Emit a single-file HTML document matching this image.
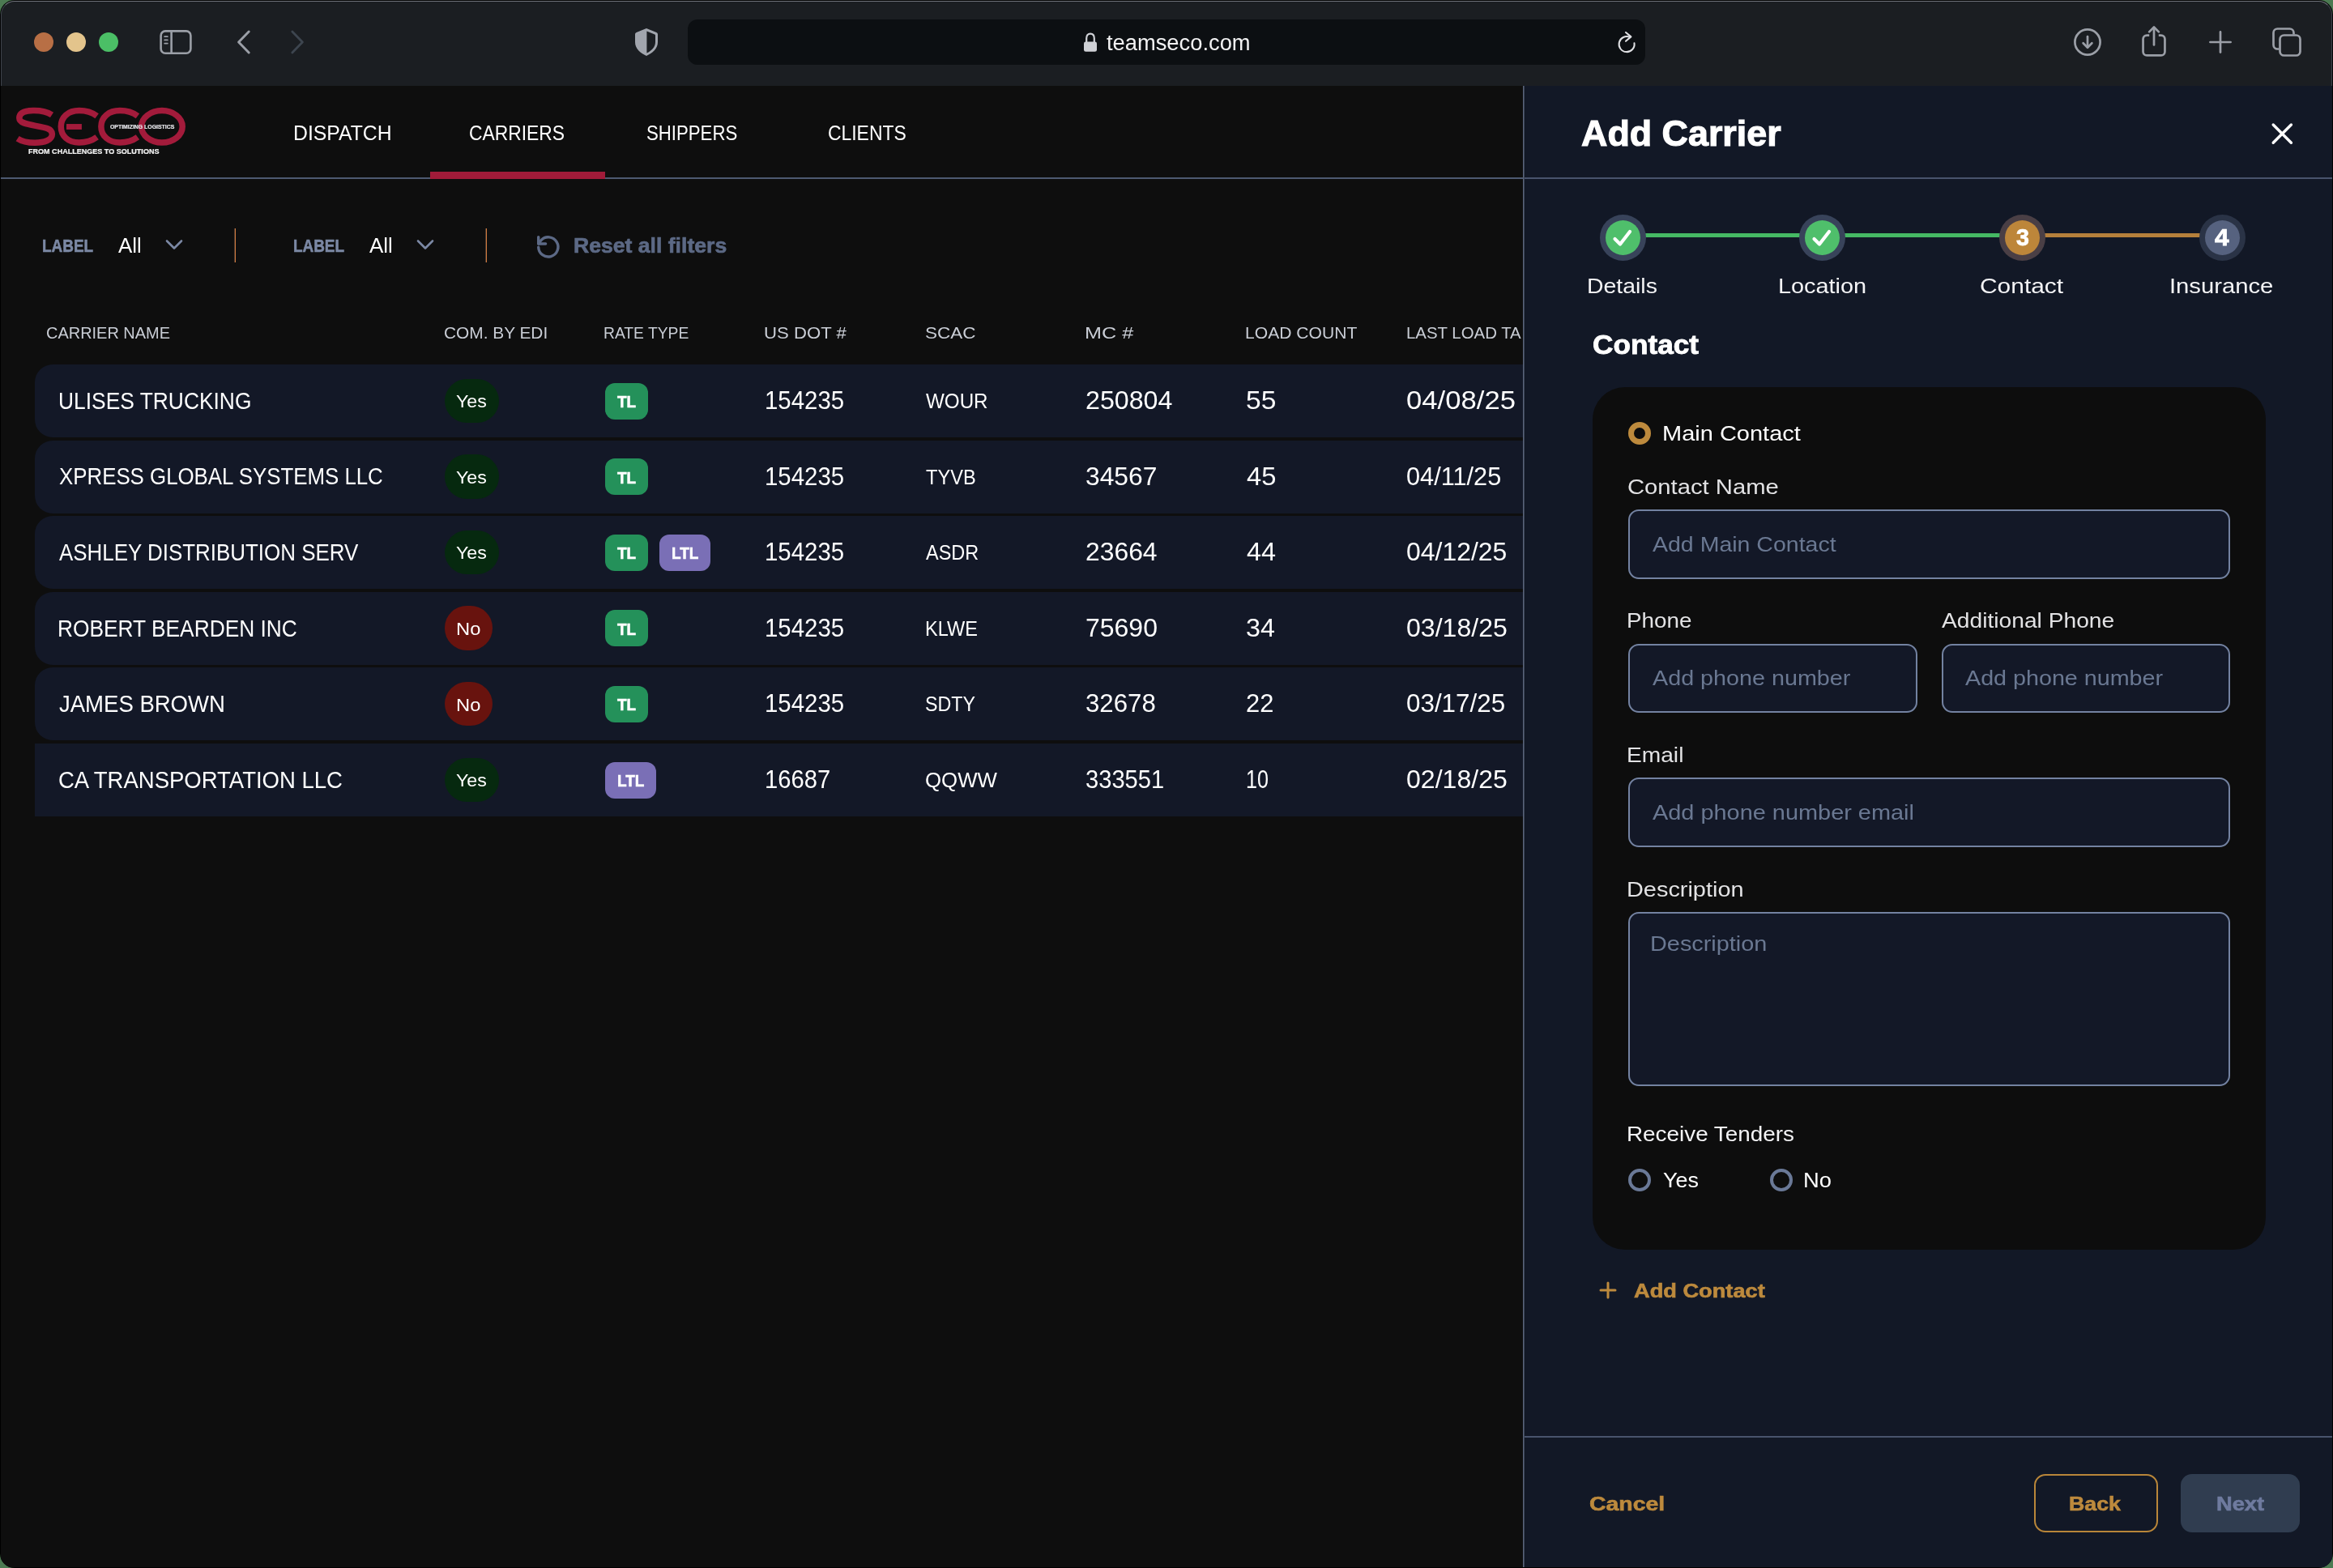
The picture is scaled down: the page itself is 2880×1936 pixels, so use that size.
<!DOCTYPE html>
<html lang="en">
<head>
<meta charset="utf-8">
<title>SECO – Carriers – Add Carrier</title>
<style>
  html, body { margin: 0; padding: 0; }
  body { width: 2880px; height: 1936px; overflow: hidden; background: #4c7a52; font-family: "Liberation Sans", sans-serif; }
  .win { position: absolute; left: 0; top: 0; width: 2880px; height: 1936px; border-radius: 18px; background: #000; overflow: hidden; }
  .abs { position: absolute; }
  .t { position: absolute; white-space: pre; line-height: normal; transform-origin: 0 0; font-family: "Liberation Sans", sans-serif; }
  svg { position: absolute; overflow: visible; }

  /* browser chrome */
  .toolbar { position: absolute; left: 1px; top: 1px; width: 2878px; height: 105px; background: #1b1e22; border-radius: 17px 17px 0 0; box-sizing: border-box; border-top: 1px solid #70747c; border-left: 1px solid #3f444c; border-right: 1px solid #3f444c; }
  .dot { position: absolute; top: 40px; width: 24px; height: 24px; border-radius: 50%; }
  .urlbar { position: absolute; left: 849px; top: 24px; width: 1182px; height: 56px; border-radius: 12px; background: #0c0f12; }

  /* app */
  .main { position: absolute; left: 1px; top: 106px; width: 1879px; height: 1829px; background: #0e0e0e; overflow: hidden; }
  .mainclip { will-change: transform; position: absolute; left: 0; top: 0; width: 1880px; height: 1936px; overflow: hidden; }
  .hline { position: absolute; left: 1px; top: 219px; width: 1879px; height: 2px; background: #4d5971; }
  .navactive { position: absolute; left: 531px; top: 212px; width: 216px; height: 9px; background: #a01b39; }
  .vdiv { position: absolute; top: 282px; width: 1px; height: 42px; background: #cf7a3e; box-shadow: -1px 0 0 #4a382e; }
  .row { position: absolute; left: 43px; width: 1900px; height: 90px; background: #131827; border-radius: 22px 0 0 22px; }
  .pill { position: absolute; left: 549px; height: 54.4px; border-radius: 27.2px; }
  .yes { width: 67px; background: #06290f; }
  .no { width: 58.8px; background: #68130e; }
  .tag { position: absolute; height: 45px; border-radius: 12px; }
  .tl { width: 53px; background: #24915a; }
  .ltl { width: 63px; background: #7a6fb6; }

  /* side panel */
  .panel { position: absolute; left: 1880px; top: 106px; width: 999px; height: 1829px; background: #121826; box-sizing: border-box; border-left: 1px solid #59647b; box-shadow: inset 1px 0 0 #3c4556; }
  .pline { position: absolute; left: 1882px; width: 997px; height: 2px; background: #48536c; }
  .card { position: absolute; left: 1966px; top: 477.5px; width: 830.5px; height: 1065px; border-radius: 40px; background: #0d0d0d; }
  .inp { position: absolute; box-sizing: border-box; border: 2px solid #7382a1; border-radius: 13px; background: #131827; }
  .step { position: absolute; top: 264.5px; width: 57px; height: 57px; border-radius: 50%; background: #38435a; }
  .step i { position: absolute; left: 7px; top: 7px; width: 43px; height: 43px; border-radius: 50%; }
  .seg { position: absolute; top: 288px; height: 5px; }
  .radio { position: absolute; width: 28px; height: 28px; border-radius: 50%; box-sizing: border-box; }
  .btn { position: absolute; top: 1820px; height: 72px; border-radius: 14px; box-sizing: border-box; }
</style>
</head>
<body>
<div class="win">

  <!-- ================= Safari toolbar ================= -->
  <div class="toolbar"></div>
  <div class="dot" style="left:42px;background:#b86f45"></div>
  <div class="dot" style="left:82px;background:#e3c48c"></div>
  <div class="dot" style="left:122px;background:#4bbf66"></div>

  <!-- sidebar icon -->
  <svg style="left:195px;top:35px" width="44" height="34" viewBox="0 0 44 34" fill="none" stroke="#9b9fa7" stroke-width="2.6">
    <rect x="3.6" y="3.4" width="36.8" height="27.4" rx="5.5"/>
    <line x1="16.6" y1="3.4" x2="16.6" y2="30.8"/>
    <g stroke-width="1.8" stroke-linecap="round"><line x1="8.2" y1="10.2" x2="11.8" y2="10.2"/><line x1="8.2" y1="14.4" x2="11.8" y2="14.4"/><line x1="8.2" y1="18.6" x2="11.8" y2="18.6"/></g>
  </svg>
  <!-- back / forward -->
  <svg style="left:288px;top:34px" width="26" height="36" viewBox="0 0 26 36" fill="none" stroke="#9b9fa7" stroke-width="3" stroke-linecap="round" stroke-linejoin="round"><polyline points="19.2,5 6.6,18 19.2,31"/></svg>
  <svg style="left:354px;top:34px" width="26" height="36" viewBox="0 0 26 36" fill="none" stroke="#3d454f" stroke-width="2.8" stroke-linecap="round" stroke-linejoin="round"><polyline points="6.8,5 19.4,18 6.8,31"/></svg>
  <!-- shield -->
  <svg style="left:784px;top:35.4px" width="28" height="34" viewBox="0 0 28 34">
    <path fill="#a1a5ad" fill-rule="evenodd" d="M14 0 L26.3 5 C27.4 5.5 28 6.3 28 7.4 V17 C28 25 21.5 30.5 14 34 C6.5 30.5 0 25 0 17 V7.4 C0 6.3 0.6 5.5 1.7 5 Z M14.4 3.5 L24.2 7.6 C24.8 7.9 25 8.2 25 8.8 V17 C25 23 20.4 27.6 14.4 30.6 Z"/>
  </svg>
  <div class="urlbar"></div>
  <!-- lock -->
  <svg style="left:1336px;top:38px" width="20" height="28" viewBox="0 0 20 28">
    <path d="M5.2 14 V9.2 C5.2 5.6 7.2 3.6 10 3.6 C12.8 3.6 14.8 5.6 14.8 9.2 V14" fill="none" stroke="#cfd1d6" stroke-width="2.2"/>
    <rect x="2" y="13.4" width="16" height="12.4" rx="2.4" fill="#cfd1d6"/>
  </svg>
  <!-- reload -->
  <svg style="left:1992px;top:38px" width="32" height="34" viewBox="0 0 32 34" fill="none" stroke="#e0e1e4" stroke-width="2.05" stroke-linecap="round" stroke-linejoin="round">
    <path d="M25.5 15.3 A9.5 9.5 0 1 1 20.1 8"/>
    <polyline points="15,2 21.4,7.4 15,12.8"/>
  </svg>
  <!-- download -->
  <svg style="left:2558px;top:33px" width="38" height="38" viewBox="0 0 38 38" fill="none" stroke="#9b9fa7" stroke-width="2.7" stroke-linecap="round" stroke-linejoin="round">
    <circle cx="19" cy="19" r="15.6"/>
    <line x1="19" y1="12.2" x2="19" y2="25.4"/>
    <polyline points="13.6,20.3 19,25.7 24.4,20.3"/>
  </svg>
  <!-- share -->
  <svg style="left:2641px;top:29px" width="36" height="44" viewBox="0 0 36 44" fill="none" stroke="#9b9fa7" stroke-width="2.7" stroke-linecap="round" stroke-linejoin="round">
    <path d="M12.2 14.55 H9.3 C6.5 14.55 4.55 16.5 4.55 19.3 V34.7 C4.55 37.5 6.5 39.45 9.3 39.45 H26.7 C29.5 39.45 31.45 37.5 31.45 34.7 V19.3 C31.45 16.5 29.5 14.55 26.7 14.55 H23.8" stroke-linecap="butt"/>
    <line x1="18" y1="5" x2="18" y2="26.4"/>
    <polyline points="12.1,10.4 18,4.5 23.9,10.4"/>
  </svg>
  <!-- plus -->
  <svg style="left:2724px;top:35px" width="34" height="34" viewBox="0 0 34 34" fill="none" stroke="#9b9fa7" stroke-width="2.7" stroke-linecap="round"><line x1="17" y1="4.4" x2="17" y2="29.6"/><line x1="4.4" y1="17" x2="29.6" y2="17"/></svg>
  <!-- tabs -->
  <svg style="left:2803px;top:32px" width="40" height="40" viewBox="0 0 40 40" fill="none" stroke="#9b9fa7" stroke-width="2.7" stroke-linejoin="round">
    <path d="M10.5 28.5 H8.5 C5.7 28.5 3.5 26.3 3.5 23.5 V8.5 C3.5 5.7 5.7 3.5 8.5 3.5 H23.5 C26.3 3.5 28.5 5.7 28.5 8.5 V10.5"/>
    <rect x="11.5" y="11.5" width="25" height="25" rx="5"/>
  </svg>

  <!-- ================= App: main list ================= -->
  <div class="main"></div>
  <div class="mainclip">
    <!-- logo -->
    <svg style="left:10px;top:120px" width="230" height="80" viewBox="0 0 2333 811" fill="none" stroke="#a31b3b" stroke-width="76">
      <path d="M548 222 C480 178 390 166 310 168 C190 170 140 205 140 262 C140 322 230 338 345 358 C470 380 552 396 552 462 C552 540 450 570 335 570 C245 570 170 552 118 518"/>
      <path d="M1112 236 C1050 190 965 168 890 168 C750 168 662 250 662 368 C662 486 750 568 890 568 C965 568 1050 546 1112 500"/>
      <rect x="730" y="335" width="192" height="70" fill="#a31b3b" stroke="none"/>
      <path d="M1622 236 C1560 190 1475 168 1400 168 C1260 168 1165 250 1165 368 C1165 486 1260 568 1400 568 C1475 568 1560 546 1622 500"/>
      <ellipse cx="1926" cy="368" rx="257" ry="200"/>
    </svg>
    <div class="hline"></div>
    <div class="navactive"></div>

    <!-- filters -->
    <svg style="left:203px;top:294px" width="24" height="16" viewBox="0 0 24 16" fill="none" stroke="#7b88a4" stroke-width="2.6" stroke-linecap="round" stroke-linejoin="round"><polyline points="3,3.5 12,12.5 21,3.5"/></svg>
    <div class="vdiv" style="left:290px"></div>
    <svg style="left:513px;top:294px" width="24" height="16" viewBox="0 0 24 16" fill="none" stroke="#7b88a4" stroke-width="2.6" stroke-linecap="round" stroke-linejoin="round"><polyline points="3,3.5 12,12.5 21,3.5"/></svg>
    <div class="vdiv" style="left:600px"></div>
    <svg style="left:663.4px;top:290.6px" width="28" height="28" viewBox="0 0 28 28" fill="none" stroke="#5c6985" stroke-width="3.4" stroke-linecap="round" stroke-linejoin="round">
      <path d="M1.7 14.2 A12.1 12.1 0 1 0 5 5.6 L1.7 10"/>
      <polyline points="1.7,1.6 1.7,10 10.6,10"/>
    </svg>

    <!-- rows -->
    <div class="row" style="top:450.0px"></div>
<div class="pill yes" style="top:467.6px"></div>
<div class="tag tl" style="left:747px;top:472.5px"></div>
<div class="row" style="top:543.6px"></div>
<div class="pill yes" style="top:561.2px"></div>
<div class="tag tl" style="left:747px;top:566.1px"></div>
<div class="row" style="top:637.2px"></div>
<div class="pill yes" style="top:654.8px"></div>
<div class="tag tl" style="left:747px;top:659.7px"></div>
<div class="tag ltl" style="left:814px;top:659.7px"></div>
<div class="row" style="top:730.8px"></div>
<div class="pill no" style="top:748.4px"></div>
<div class="tag tl" style="left:747px;top:753.3px"></div>
<div class="row" style="top:824.4px"></div>
<div class="pill no" style="top:842.0px"></div>
<div class="tag tl" style="left:747px;top:846.9px"></div>
<div class="row" style="top:918.0px;border-radius:0"></div>
<div class="pill yes" style="top:935.6px"></div>
<div class="tag ltl" style="left:747px;top:940.5px"></div>
    <span class="t" style="left:361.68px;top:148.90px;font-size:26px;color:#ffffff;transform:scaleX(0.9526)">DISPATCH</span>
<span class="t" style="left:578.83px;top:148.90px;font-size:26px;color:#ffffff;transform:scaleX(0.8787)">CARRIERS</span>
<span class="t" style="left:797.70px;top:148.90px;font-size:26px;color:#ffffff;transform:scaleX(0.8534)">SHIPPERS</span>
<span class="t" style="left:1022.33px;top:148.90px;font-size:26px;color:#ffffff;transform:scaleX(0.8804)">CLIENTS</span>
<span class="t" style="left:136.49px;top:152.40px;font-size:8px;color:#e8e8ec;transform:scaleX(0.8615);font-weight:bold;-webkit-text-stroke:0.21px #e8e8ec">OPTIMIZING LOGISTICS</span>
<span class="t" style="left:35.41px;top:181.80px;font-size:9px;color:#f0f0f0;transform:scaleX(1.0039);font-weight:bold;-webkit-text-stroke:0.23px #f0f0f0">FROM CHALLENGES TO SOLUTIONS</span>
<span class="t" style="left:51.82px;top:291.20px;font-size:22px;color:#7b88a4;transform:scaleX(0.8607);font-weight:bold;-webkit-text-stroke:0.57px #7b88a4">LABEL</span>
<span class="t" style="left:145.89px;top:289.00px;font-size:25.5px;color:#ffffff;transform:scaleX(1.0176)">All</span>
<span class="t" style="left:361.93px;top:291.20px;font-size:22px;color:#7b88a4;transform:scaleX(0.8593);font-weight:bold;-webkit-text-stroke:0.57px #7b88a4">LABEL</span>
<span class="t" style="left:455.89px;top:289.00px;font-size:25.5px;color:#ffffff;transform:scaleX(1.0176)">All</span>
<span class="t" style="left:707.74px;top:289.00px;font-size:25.5px;color:#5c6985;transform:scaleX(1.0428);font-weight:bold;-webkit-text-stroke:0.66px #5c6985">Reset all filters</span>
<span class="t" style="left:56.96px;top:399.40px;font-size:21px;color:#c9cdd5;transform:scaleX(0.9502)">CARRIER NAME</span>
<span class="t" style="left:547.91px;top:399.40px;font-size:21px;color:#c9cdd5;transform:scaleX(0.9928)">COM. BY EDI</span>
<span class="t" style="left:745.48px;top:399.40px;font-size:21px;color:#c9cdd5;transform:scaleX(0.9178)">RATE TYPE</span>
<span class="t" style="left:943.35px;top:399.40px;font-size:21px;color:#c9cdd5;transform:scaleX(1.0545)">US DOT #</span>
<span class="t" style="left:1141.54px;top:399.40px;font-size:21px;color:#c9cdd5;transform:scaleX(1.0716)">SCAC</span>
<span class="t" style="left:1339.01px;top:399.40px;font-size:21px;color:#c9cdd5;transform:scaleX(1.1997)">MC #</span>
<span class="t" style="left:1537.34px;top:399.40px;font-size:21px;color:#c9cdd5;transform:scaleX(1.0048)">LOAD COUNT</span>
<span class="t" style="left:1735.89px;top:399.40px;font-size:21px;color:#c9cdd5;transform:scaleX(0.9713)">LAST LOAD TA</span>
<span class="t" style="left:71.60px;top:478.80px;font-size:29px;color:#ffffff;transform:scaleX(0.9096)">ULISES TRUCKING</span>
<span class="t" style="left:563.06px;top:483.20px;font-size:22.5px;color:#ffffff;transform:scaleX(1.0316)">Yes</span>
<span class="t" style="left:762.04px;top:484.00px;font-size:20.5px;color:#ffffff;transform:scaleX(0.9265);font-weight:bold;-webkit-text-stroke:0.53px #ffffff">TL</span>
<span class="t" style="left:943.60px;top:477.00px;font-size:30.5px;color:#ffffff;transform:scaleX(0.9636)">154235</span>
<span class="t" style="left:1143.40px;top:481.00px;font-size:25px;color:#ffffff;transform:scaleX(0.9677)">WOUR</span>
<span class="t" style="left:1340.05px;top:477.00px;font-size:30.5px;color:#ffffff;transform:scaleX(1.0556)">250804</span>
<span class="t" style="left:1538.02px;top:477.00px;font-size:30.5px;color:#ffffff;transform:scaleX(1.1008)">55</span>
<span class="t" style="left:1736.24px;top:477.00px;font-size:30.5px;color:#ffffff;transform:scaleX(1.1372)">04/08/25</span>
<span class="t" style="left:72.64px;top:572.40px;font-size:29px;color:#ffffff;transform:scaleX(0.8912)">XPRESS GLOBAL SYSTEMS LLC</span>
<span class="t" style="left:563.06px;top:576.80px;font-size:22.5px;color:#ffffff;transform:scaleX(1.0316)">Yes</span>
<span class="t" style="left:762.04px;top:577.60px;font-size:20.5px;color:#ffffff;transform:scaleX(0.9265);font-weight:bold;-webkit-text-stroke:0.53px #ffffff">TL</span>
<span class="t" style="left:943.60px;top:570.60px;font-size:30.5px;color:#ffffff;transform:scaleX(0.9636)">154235</span>
<span class="t" style="left:1143.13px;top:574.60px;font-size:25px;color:#ffffff;transform:scaleX(0.9447)">TYVB</span>
<span class="t" style="left:1340.16px;top:570.60px;font-size:30.5px;color:#ffffff;transform:scaleX(1.0426)">34567</span>
<span class="t" style="left:1538.91px;top:570.60px;font-size:30.5px;color:#ffffff;transform:scaleX(1.0734)">45</span>
<span class="t" style="left:1736.40px;top:570.60px;font-size:30.5px;color:#ffffff;transform:scaleX(1.0070)">04/11/25</span>
<span class="t" style="left:73.39px;top:666.00px;font-size:29px;color:#ffffff;transform:scaleX(0.8939)">ASHLEY DISTRIBUTION SERV</span>
<span class="t" style="left:563.06px;top:670.40px;font-size:22.5px;color:#ffffff;transform:scaleX(1.0316)">Yes</span>
<span class="t" style="left:762.04px;top:671.20px;font-size:20.5px;color:#ffffff;transform:scaleX(0.9265);font-weight:bold;-webkit-text-stroke:0.53px #ffffff">TL</span>
<span class="t" style="left:828.87px;top:671.20px;font-size:20.5px;color:#ffffff;transform:scaleX(0.9286);font-weight:bold;-webkit-text-stroke:0.53px #ffffff">LTL</span>
<span class="t" style="left:943.60px;top:664.20px;font-size:30.5px;color:#ffffff;transform:scaleX(0.9636)">154235</span>
<span class="t" style="left:1143.41px;top:668.20px;font-size:25px;color:#ffffff;transform:scaleX(0.9388)">ASDR</span>
<span class="t" style="left:1340.06px;top:664.20px;font-size:30.5px;color:#ffffff;transform:scaleX(1.0440)">23664</span>
<span class="t" style="left:1538.92px;top:664.20px;font-size:30.5px;color:#ffffff;transform:scaleX(1.0630)">44</span>
<span class="t" style="left:1736.35px;top:664.20px;font-size:30.5px;color:#ffffff;transform:scaleX(1.0468)">04/12/25</span>
<span class="t" style="left:71.49px;top:759.60px;font-size:29px;color:#ffffff;transform:scaleX(0.9072)">ROBERT BEARDEN INC</span>
<span class="t" style="left:562.59px;top:764.00px;font-size:22.5px;color:#ffffff;transform:scaleX(1.0547)">No</span>
<span class="t" style="left:762.04px;top:764.80px;font-size:20.5px;color:#ffffff;transform:scaleX(0.9265);font-weight:bold;-webkit-text-stroke:0.53px #ffffff">TL</span>
<span class="t" style="left:943.60px;top:757.80px;font-size:30.5px;color:#ffffff;transform:scaleX(0.9636)">154235</span>
<span class="t" style="left:1141.69px;top:761.80px;font-size:25px;color:#ffffff;transform:scaleX(0.9402)">KLWE</span>
<span class="t" style="left:1340.03px;top:757.80px;font-size:30.5px;color:#ffffff;transform:scaleX(1.0484)">75690</span>
<span class="t" style="left:1538.14px;top:757.80px;font-size:30.5px;color:#ffffff;transform:scaleX(1.0593)">34</span>
<span class="t" style="left:1736.34px;top:757.80px;font-size:30.5px;color:#ffffff;transform:scaleX(1.0511)">03/18/25</span>
<span class="t" style="left:73.00px;top:853.20px;font-size:29px;color:#ffffff;transform:scaleX(0.9488)">JAMES BROWN</span>
<span class="t" style="left:562.59px;top:857.60px;font-size:22.5px;color:#ffffff;transform:scaleX(1.0547)">No</span>
<span class="t" style="left:762.04px;top:858.40px;font-size:20.5px;color:#ffffff;transform:scaleX(0.9265);font-weight:bold;-webkit-text-stroke:0.53px #ffffff">TL</span>
<span class="t" style="left:943.60px;top:851.40px;font-size:30.5px;color:#ffffff;transform:scaleX(0.9636)">154235</span>
<span class="t" style="left:1142.21px;top:855.40px;font-size:25px;color:#ffffff;transform:scaleX(0.9294)">SDTY</span>
<span class="t" style="left:1340.19px;top:851.40px;font-size:30.5px;color:#ffffff;transform:scaleX(1.0228)">32678</span>
<span class="t" style="left:1538.11px;top:851.40px;font-size:30.5px;color:#ffffff;transform:scaleX(1.0124)">22</span>
<span class="t" style="left:1736.37px;top:851.40px;font-size:30.5px;color:#ffffff;transform:scaleX(1.0288)">03/17/25</span>
<span class="t" style="left:72.22px;top:946.80px;font-size:29px;color:#ffffff;transform:scaleX(0.9482)">CA TRANSPORTATION LLC</span>
<span class="t" style="left:563.06px;top:951.20px;font-size:22.5px;color:#ffffff;transform:scaleX(1.0316)">Yes</span>
<span class="t" style="left:761.87px;top:952.00px;font-size:20.5px;color:#ffffff;transform:scaleX(0.9286);font-weight:bold;-webkit-text-stroke:0.53px #ffffff">LTL</span>
<span class="t" style="left:943.62px;top:945.00px;font-size:30.5px;color:#ffffff;transform:scaleX(0.9564)">16687</span>
<span class="t" style="left:1142.36px;top:949.00px;font-size:25px;color:#ffffff;transform:scaleX(1.0330)">QQWW</span>
<span class="t" style="left:1340.29px;top:945.00px;font-size:30.5px;color:#ffffff;transform:scaleX(0.9545)">333551</span>
<span class="t" style="left:1537.72px;top:945.00px;font-size:30.5px;color:#ffffff;transform:scaleX(0.8236)">10</span>
<span class="t" style="left:1736.34px;top:945.00px;font-size:30.5px;color:#ffffff;transform:scaleX(1.0511)">02/18/25</span>
  </div>

  <!-- ================= App: Add Carrier panel ================= -->
  <div class="panel"></div>
  <div class="pline" style="top:218.5px"></div>
  <div class="pline" style="top:1773px"></div>
  <!-- close -->
  <svg style="left:2801px;top:149px" width="32" height="32" viewBox="0 0 32 32" fill="none" stroke="#ffffff" stroke-width="3.4" stroke-linecap="round"><line x1="5.2" y1="5" x2="27.4" y2="27.2"/><line x1="27.4" y1="5" x2="5.2" y2="27.2"/></svg>

  <!-- stepper -->
  <div class="seg" style="left:2003px;width:493px;background:#45b964"></div>
  <div class="seg" style="left:2496px;width:247px;background:#b5803b"></div>
  <div class="step" style="left:1975px"><i style="background:#4fbf6b"></i></div>
  <div class="step" style="left:2221px"><i style="background:#4fbf6b"></i></div>
  <div class="step" style="left:2467.5px;background:#4a3f45"><i style="background:#bd863a"></i></div>
  <div class="step" style="left:2714.5px;background:#2a3346"><i style="background:#56627f"></i></div>
  <svg style="left:1989px;top:280px" width="28" height="26" viewBox="0 0 28 26" fill="none" stroke="#ffffff" stroke-width="4.2" stroke-linecap="round" stroke-linejoin="round"><polyline points="4.5,15 11,21.5 23,6"/></svg>
  <svg style="left:2235px;top:280px" width="28" height="26" viewBox="0 0 28 26" fill="none" stroke="#ffffff" stroke-width="4.2" stroke-linecap="round" stroke-linejoin="round"><polyline points="4.5,15 11,21.5 23,6"/></svg>

  <!-- contact card -->
  <div class="card"></div>
  <div class="radio" style="left:2010px;top:521px;border:7px solid #bd8a3d"></div>
  <div class="inp" style="left:2010px;top:629px;width:743px;height:86px"></div>
  <div class="inp" style="left:2010px;top:795px;width:356.5px;height:85px"></div>
  <div class="inp" style="left:2396.5px;top:795px;width:356.5px;height:85px"></div>
  <div class="inp" style="left:2010px;top:960px;width:743px;height:86px"></div>
  <div class="inp" style="left:2010px;top:1126px;width:743px;height:215px"></div>
  <div class="radio" style="left:2010px;top:1442.5px;border:4px solid #6a7997"></div>
  <div class="radio" style="left:2184.5px;top:1442.5px;border:4px solid #6a7997"></div>

  <!-- add contact -->
  <svg style="left:1972px;top:1580px" width="26" height="26" viewBox="0 0 26 26" fill="none" stroke="#bd8a3d" stroke-width="3" stroke-linecap="round"><line x1="13" y1="4" x2="13" y2="22"/><line x1="4" y1="13" x2="22" y2="13"/></svg>

  <!-- footer buttons -->
  <div class="btn" style="left:2511px;width:152.6px;border:2px solid #b98639"></div>
  <div class="btn" style="left:2692px;width:146.5px;background:#303d50"></div>

  <div class="abs" style="left:0;top:0;width:2880px;height:1936px;will-change:transform"><span class="t" style="left:1366.44px;top:38.00px;font-size:27px;color:#f2f2f3;transform:scaleX(1.0115)">teamseco.com</span>
<span class="t" style="left:1952.40px;top:140.00px;font-size:44px;color:#ffffff;transform:scaleX(1.0190);font-weight:bold;-webkit-text-stroke:1.14px #ffffff">Add Carrier</span>
<span class="t" style="left:1959.29px;top:338.70px;font-size:25.2px;color:#f4f4f6;transform:scaleX(1.1278)">Details</span>
<span class="t" style="left:2194.85px;top:338.70px;font-size:25.2px;color:#f4f4f6;transform:scaleX(1.1460)">Location</span>
<span class="t" style="left:2444.47px;top:338.70px;font-size:25.2px;color:#f4f4f6;transform:scaleX(1.1878)">Contact</span>
<span class="t" style="left:2678.35px;top:338.70px;font-size:25.2px;color:#f4f4f6;transform:scaleX(1.1603)">Insurance</span>
<span class="t" style="left:2488.74px;top:277.30px;font-size:29px;color:#ffffff;transform:scaleX(0.9884);font-weight:bold;-webkit-text-stroke:0.75px #ffffff">3</span>
<span class="t" style="left:2734.03px;top:277.30px;font-size:29px;color:#ffffff;transform:scaleX(1.0832);font-weight:bold;-webkit-text-stroke:0.75px #ffffff">4</span>
<span class="t" style="left:1965.97px;top:408.00px;font-size:32.5px;color:#ffffff;transform:scaleX(1.0833);font-weight:bold;-webkit-text-stroke:0.84px #ffffff">Contact</span>
<span class="t" style="left:2051.64px;top:521.40px;font-size:25.2px;color:#ffffff;transform:scaleX(1.1510)">Main Contact</span>
<span class="t" style="left:2009.11px;top:586.60px;font-size:25.2px;color:#e2e2e4;transform:scaleX(1.1602)">Contact Name</span>
<span class="t" style="left:2039.56px;top:657.80px;font-size:25.2px;color:#6a7892;transform:scaleX(1.1318)">Add Main Contact</span>
<span class="t" style="left:2008.34px;top:752.40px;font-size:25.2px;color:#e2e2e4;transform:scaleX(1.1034)">Phone</span>
<span class="t" style="left:2396.57px;top:752.40px;font-size:25.2px;color:#e2e2e4;transform:scaleX(1.1194)">Additional Phone</span>
<span class="t" style="left:2039.56px;top:823.40px;font-size:25.2px;color:#6a7892;transform:scaleX(1.1407)">Add phone number</span>
<span class="t" style="left:2425.56px;top:823.40px;font-size:25.2px;color:#6a7892;transform:scaleX(1.1393)">Add phone number</span>
<span class="t" style="left:2008.31px;top:917.80px;font-size:25.2px;color:#e2e2e4;transform:scaleX(1.1175)">Email</span>
<span class="t" style="left:2039.56px;top:989.00px;font-size:25.2px;color:#6a7892;transform:scaleX(1.1474)">Add phone number email</span>
<span class="t" style="left:2008.25px;top:1083.60px;font-size:25.2px;color:#e2e2e4;transform:scaleX(1.1472)">Description</span>
<span class="t" style="left:2037.45px;top:1150.80px;font-size:25.2px;color:#6a7892;transform:scaleX(1.1455)">Description</span>
<span class="t" style="left:2008.33px;top:1386.20px;font-size:25.2px;color:#f4f4f6;transform:scaleX(1.1057)">Receive Tenders</span>
<span class="t" style="left:2052.72px;top:1442.60px;font-size:25.2px;color:#ffffff;transform:scaleX(1.0696)">Yes</span>
<span class="t" style="left:2226.38px;top:1442.60px;font-size:25.2px;color:#ffffff;transform:scaleX(1.0847)">No</span>
<span class="t" style="left:2017.19px;top:1579.80px;font-size:24.5px;color:#bd8a3d;transform:scaleX(1.1104);font-weight:bold;-webkit-text-stroke:0.64px #bd8a3d">Add Contact</span>
<span class="t" style="left:1962.25px;top:1842.80px;font-size:24.5px;color:#bd8a3d;transform:scaleX(1.1591);font-weight:bold;-webkit-text-stroke:0.64px #bd8a3d">Cancel</span>
<span class="t" style="left:2554.31px;top:1842.80px;font-size:24.5px;color:#bd8a3d;transform:scaleX(1.0902);font-weight:bold;-webkit-text-stroke:0.64px #bd8a3d">Back</span>
<span class="t" style="left:2735.59px;top:1842.80px;font-size:24.5px;color:#6f7b9f;transform:scaleX(1.1109);font-weight:bold;-webkit-text-stroke:0.64px #6f7b9f">Next</span></div>
</div>
</body>
</html>
